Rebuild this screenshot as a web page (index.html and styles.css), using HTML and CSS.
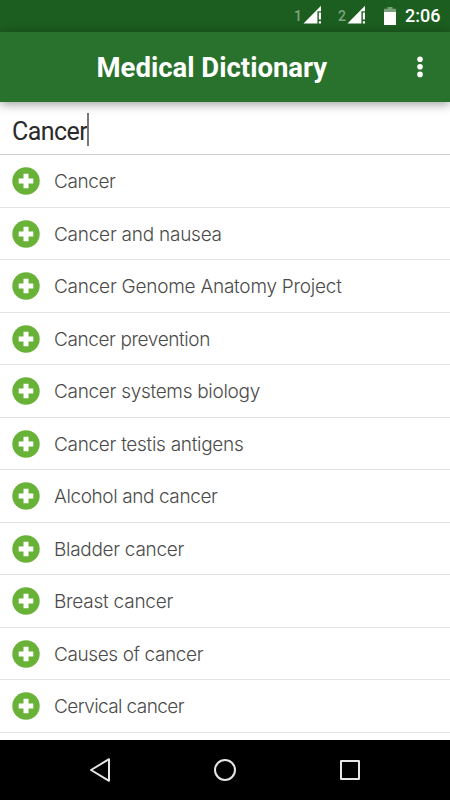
FILE: index.html
```html
<!DOCTYPE html>
<html lang="en">
<head>
<meta charset="utf-8">
<title>Medical Dictionary</title>
<link rel="stylesheet" href="styles.css">
</head>
<body>
<svg class="defs" aria-hidden="true">
  <symbol id="plus" viewBox="0 0 28 28"><circle cx="14" cy="14" r="13.7" fill="#68b238"/><path d="M11.5 6.7h5v4.8h4.8v5h-4.8v4.8h-5v-4.8H6.7v-5h4.8z" fill="#fff"/></symbol>
  <symbol id="signal" viewBox="0 0 20 20"><path d="M.5 18.5 18 .8v5.4h-3.6v12.3z" fill="#fff"/><path d="M15.8 7.4H18v7h-2.2zM15.8 16.2H18v2.3h-2.2z" fill="#fff"/></symbol>
</svg>
<div class="screen">
  <header class="status">
    <span class="sim">1</span><svg class="signal"><use href="#signal"/></svg>
    <span class="sim second">2</span><svg class="signal"><use href="#signal"/></svg>
    <svg class="battery" viewBox="0 0 12 18"><path d="M3.5 0h5v1.7H12V5H0V1.7h3.5z" fill="#79a17b"/><path d="M0 5h12v13H0z" fill="#fff"/></svg>
    <span class="time">2:06</span>
  </header>
  <div class="appbar">
    <h1>Medical Dictionary</h1>
    <svg class="more" viewBox="0 0 6 22"><g fill="#fff"><circle cx="3" cy="3.2" r="2.8"/><circle cx="3" cy="10.8" r="2.8"/><circle cx="3" cy="18.4" r="2.8"/></g></svg>
  </div>
  <div class="search"><span>Cancer</span><i class="caret"></i></div>
  <ul class="results">
    <li><svg class="plus"><use href="#plus"/></svg><span>Cancer</span></li>
    <li class="wide"><svg class="plus"><use href="#plus"/></svg><span>Cancer and nausea</span></li>
    <li class="wide"><svg class="plus"><use href="#plus"/></svg><span>Cancer Genome Anatomy Project</span></li>
    <li><svg class="plus"><use href="#plus"/></svg><span>Cancer prevention</span></li>
    <li class="loose"><svg class="plus"><use href="#plus"/></svg><span>Cancer systems biology</span></li>
    <li class="loose"><svg class="plus"><use href="#plus"/></svg><span>Cancer testis antigens</span></li>
    <li><svg class="plus"><use href="#plus"/></svg><span>Alcohol and cancer</span></li>
    <li class="loose"><svg class="plus"><use href="#plus"/></svg><span>Bladder cancer</span></li>
    <li class="wide"><svg class="plus"><use href="#plus"/></svg><span>Breast cancer</span></li>
    <li><svg class="plus"><use href="#plus"/></svg><span>Causes of cancer</span></li>
    <li class="tight"><svg class="plus"><use href="#plus"/></svg><span>Cervical cancer</span></li>
  </ul>
  <nav class="navbar">
    <svg viewBox="0 0 24 24"><path d="M21 1.2v21.6L3 12z"/></svg>
    <svg viewBox="0 0 24 24"><circle cx="12" cy="12" r="10"/></svg>
    <svg viewBox="0 0 24 24"><rect x="3" y="3" width="18" height="18"/></svg>
  </nav>
</div>
</body>
</html>
```

FILE: styles.css
```css
* { box-sizing: border-box; }
body { margin: 0; font-family: Roboto, sans-serif; }
.defs { display: none; }
.screen { width: 450px; height: 800px; display: flex; flex-direction: column; overflow: hidden; background: #fff; }
.status { height: 32px; flex: none; display: flex; align-items: center; padding-left: 294px; background: #1c5e20; color: #fff; }
.sim { width: 9px; font-size: 14px; font-weight: 500; color: #7fa581; }
.second { margin-left: 15px; }
.signal { width: 20px; height: 20px; margin-top: -2px; }
.battery { width: 12px; height: 18px; margin: -1px 9px 0 17px; }
.time { font-size: 18px; font-weight: 500; line-height: 32px; }
.appbar { position: relative; height: 70px; flex: none; display: flex; align-items: center; padding-left: 96.5px; background: #29722d; box-shadow: 0 2px 10px rgba(0,0,0,.4); }
h1 { margin: 2px 0 0; font-size: 27.5px; font-weight: 700; line-height: 36px; width: 320.5px; color: #fff; white-space: nowrap; }
.more { width: 6px; height: 22px; }
.search { height: 53px; flex: none; display: flex; align-items: center; padding: 7px 12px 0; border-bottom: 1px solid #cecece; font-size: 25px; letter-spacing: -.55px; color: #2a2a2a; }
.caret { width: 2px; height: 33px; margin-top: -5px; background: #777; }
.results { flex: 1; min-height: 0; overflow: hidden; margin: 0; padding: 0; list-style: none; }
.results li { height: 52.5px; display: flex; align-items: center; padding: 1px 0 0 12px; gap: 14px; border-bottom: 1px solid #e2e2e2; font-family: Inter, sans-serif; font-size: 19px; font-weight: 300; letter-spacing: -.4px; color: #4b4b4b; white-space: nowrap; }
.results span { padding-top: 1px; }
.results .wide { letter-spacing: -.24px; }
.results .loose { letter-spacing: -.3px; }
.results .tight { letter-spacing: -.6px; }
.plus { width: 28px; height: 28px; }
.navbar { height: 60px; flex: none; display: flex; align-items: center; justify-content: center; gap: 101px; background: #000; }
.navbar svg { width: 24px; height: 24px; fill: none; stroke: #e6e6e6; stroke-width: 2; stroke-linejoin: round; }
```
